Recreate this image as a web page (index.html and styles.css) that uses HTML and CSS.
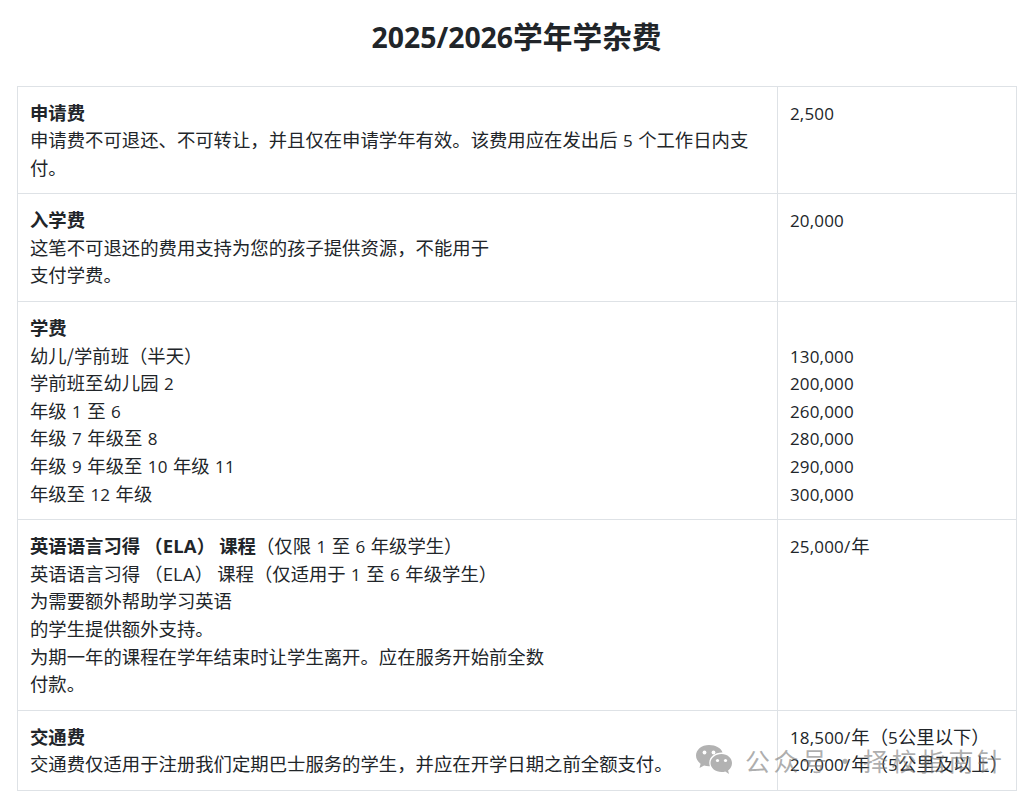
FILE: index.html
```html
<!DOCTYPE html>
<html lang="zh-CN">
<head>
<meta charset="utf-8">
<title>2025/2026学年学杂费</title>
<link rel="stylesheet" href="styles.css">
</head>
<body>
<main class="page">
<h1 class="title"><span class="lat-title">2025/2026</span>学年学杂费</h1>
<table class="fees">
<colgroup><col class="col-desc"><col class="col-amt"></colgroup>
<tbody>
<tr>
<td><strong>申请费</strong><br>申请费不可退还、不可转让，并且仅在申请学年有效。该费用应在发出后<span class="lat"> 5 </span>个工作日内支付。</td>
<td><span class="lat">2,500</span></td>
</tr>
<tr>
<td><strong>入学费</strong><br>这笔不可退还的费用支持为您的孩子提供资源，不能用于<br>支付学费。</td>
<td><span class="lat">20,000</span></td>
</tr>
<tr>
<td><strong>学费</strong><br>幼儿/学前班（半天）<br>学前班至幼儿园<span class="lat"> 2</span><br>年级<span class="lat"> 1 </span>至<span class="lat"> 6</span><br>年级<span class="lat"> 7 </span>年级至<span class="lat"> 8</span><br>年级<span class="lat"> 9 </span>年级至<span class="lat"> 10 </span>年级<span class="lat"> 11</span><br>年级至<span class="lat"> 12 </span>年级</td>
<td><br><span class="lat">130,000</span><br><span class="lat">200,000</span><br><span class="lat">260,000</span><br><span class="lat">280,000</span><br><span class="lat">290,000</span><br><span class="lat">300,000</span></td>
</tr>
<tr>
<td><strong>英语语言习得 （<span class="lat abbr">ELA</span>） 课程</strong>（仅限<span class="lat"> 1 </span>至<span class="lat"> 6 </span>年级学生）<br>英语语言习得 （<span class="lat abbr">ELA</span>） 课程（仅适用于<span class="lat"> 1 </span>至<span class="lat"> 6 </span>年级学生）<br>为需要额外帮助学习英语<br>的学生提供额外支持。<br>为期一年的课程在学年结束时让学生离开。应在服务开始前全数<br>付款。</td>
<td><span class="lat">25,000/</span><span class="unit">年</span></td>
</tr>
<tr>
<td><strong>交通费</strong><br>交通费仅适用于注册我们定期巴士服务的学生，并应在开学日期之前全额支付。</td>
<td class="nowrap"><span class="lat">18,500/</span><span class="unit">年</span>（<span class="lat">5</span>公里以下）<br><span class="lat">20,000/</span><span class="unit">年</span>（<span class="lat">5</span>公里及以上）</td>
</tr>
</tbody>
</table>
</main>
<div class="watermark">
<svg class="wm-icon" width="38" height="32" viewBox="0 0 38 32" aria-hidden="true">
<path class="wm-fill" d="M14 1C6.500 1 1 5.800 1 11.600c0 3.300 1.800 6.200 4.600 8.200L4.500 24l4.600-2.400c1.600.5 3.200.7 4.900.7h.9c-.4-1.100-.6-2.300-.6-3.500 0-5.900 5.500-10.200 12.400-10.200h.8C26.400 4.200 20.800 1 14 1z"/>
<circle class="wm-cut" cx="9.500" cy="8.500" r="1.900"/>
<circle class="wm-cut" cx="18.500" cy="8.500" r="1.900"/>
<path class="wm-fill" d="M26.500 10C20.500 10 15.500 14 15.500 19c0 5 5 9 11 9 1.300 0 2.600-.2 3.800-.6L34 30l-.9-3.500c2.400-1.700 3.900-4.400 3.900-7.500 0-5-4.500-9-10.500-9z"/>
<circle class="wm-cut" cx="22.500" cy="16.500" r="1.600"/>
<circle class="wm-cut" cx="30.500" cy="16.500" r="1.600"/>
</svg>
<span class="wm-text">公众号<span class="wm-dot">·</span>择校指南针</span>
</div>
</body>
</html>
```
FILE: styles.css
```css
html, body {
  margin: 0;
  padding: 0;
  background: #fff;
}
body {
  font-family: "Noto Sans CJK SC", "Open Sans", sans-serif;
  color: #212529;
  font-size: 18.36px;
  line-height: 27.6px;
  height: 801px;
  overflow: hidden;
  position: relative;
}
.page {
  padding: 0 20px 0 17px;
}
.title {
  margin: 0;
  height: 85.500px;
  box-sizing: border-box;
  padding-top: 15px;
  line-height: 42px;
  font-size: 29.700px;
  font-weight: 700;
  text-align: center;
}
.lat-title {
  font-family: "Open Sans", sans-serif;
  font-size: 28.400px;
  line-height: 0;
}
.fees {
  width: 999px;
  table-layout: fixed;
  border-collapse: collapse;
}
.col-desc { width: 760px; }
.col-amt { width: 239px; }
.fees td {
  border: 1px solid #dee2e6;
  padding: 12px;
  vertical-align: top;
}
.fees .nowrap { white-space: nowrap; }
.fees strong { font-weight: 700; }
.lat {
  font-family: "Open Sans", sans-serif;
  font-size: 17px;
  line-height: 0;
  letter-spacing: 0.15px;
  word-spacing: 0.8px;
}
.abbr { font-size: 18.500px; }
.unit { margin-left: 1px; }
.watermark {
  position: absolute;
  left: 695px;
  top: 742px;
  display: flex;
  align-items: center;
  gap: 12px;
  color: rgba(120, 120, 120, 0.6);
  pointer-events: none;
}
.wm-icon { display: block; }
.wm-fill { fill: #b2b2b2; }
.wm-cut { fill: #fff; }
.wm-text {
  font-size: 25px;
  line-height: 36px;
  white-space: nowrap;
  letter-spacing: 3.500px;
}
.wm-dot { margin: 0 2px; }
```
